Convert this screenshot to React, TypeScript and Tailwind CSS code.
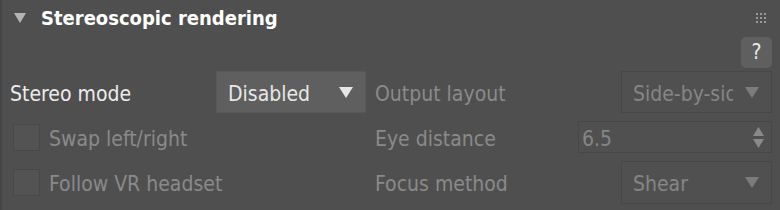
const font = { fontFamily: '"DejaVu Sans Condensed", "DejaVu Sans", sans-serif' };

function Caret({ dim }: { dim?: boolean }) {
  return (
    <svg width="14" height="11" viewBox="0 0 14 11" className="shrink-0">
      <polygon points="0,0 14,0 7,11" fill={dim ? "#7c7c7c" : "#e6e6e6"} />
    </svg>
  );
}

function Dropdown({ value, dim, width }: { value: string; dim?: boolean; width: string }) {
  return (
    <div
      className={`${width} h-full flex items-center justify-between pl-[11px] pr-[12px] border ${
        dim ? "bg-[#505050] border-[#474747] text-[#868686]" : "bg-[#5f5f5f] border-[#585858] text-[#e8e8e8]"
      }`}
    >
      <span className="overflow-hidden whitespace-nowrap w-[100px] pt-[5px]">{value}</span>
      <Caret dim={dim} />
    </div>
  );
}

function Checkbox({ label }: { label: string }) {
  return (
    <div className="flex items-center gap-[9px] pl-[11px]">
      <div className="w-[27px] h-[27px] bg-[#535353] border border-[#484848]" />
      <span className="text-[#8a8a8a] pt-[5px]">{label}</span>
    </div>
  );
}

function Grip() {
  return (
    <div className="grid grid-cols-3 gap-[2px]">
      {Array.from({ length: 9 }).map((_, i) => (
        <div key={i} className="w-[2px] h-[2px] bg-[#9a9a9a]" />
      ))}
    </div>
  );
}

export default function App() {
  return (
    <div
      style={font}
      className="w-[780px] h-[210px] bg-[#4f4f4f] border-l-2 border-[#454545] text-[21px] overflow-hidden"
    >
      {/* Header */}
      <div className="h-[36px] flex items-center justify-between pl-[12px] pr-[14px]">
        <div className="flex items-center gap-[15px]">
          <svg width="12" height="10" viewBox="0 0 12 10">
            <polygon points="0,0 12,0 6,10" fill="#b4b4b4" />
          </svg>
          <span className="text-white font-bold text-[20px]">Stereoscopic rendering</span>
        </div>
        <Grip />
      </div>

      {/* Help button */}
      <div className="flex justify-end pr-[8px] pt-[1px]">
        <div className="w-[31px] h-[31px] rounded-[5px] bg-[#5f5f5f] flex items-center justify-center text-[#e8e8e8] text-[21px]">
          ?
        </div>
      </div>

      {/* Rows */}
      <div className="flex flex-col gap-[8px] pt-[3px] pr-[8px]">
        <div className="flex h-[42px] items-center">
          <div className="w-[364px] flex items-center h-full">
            <span className="pl-[8px] pt-[5px] w-[214px] text-[#ececec]">Stereo mode</span>
            <Dropdown value="Disabled" width="w-[150px]" />
          </div>
          <div className="flex-1 flex items-center justify-between pl-[9px] h-full">
            <span className="text-[#8a8a8a] pt-[5px]">Output layout</span>
            <Dropdown value="Side-by-side" dim width="w-[151px]" />
          </div>
        </div>

        <div className="flex h-[32px] items-center">
          <div className="w-[364px]">
            <Checkbox label="Swap left/right" />
          </div>
          <div className="flex-1 flex items-center justify-between pl-[9px] h-full">
            <span className="text-[#8a8a8a] pt-[5px]">Eye distance</span>
            <div className="w-[194px] h-full flex items-center justify-between pl-[3px] pr-[7px] bg-[#505050] border border-[#474747] text-[#868686]">
              <span className="pt-[5px]">6.5</span>
              <div className="flex flex-col gap-[3px]">
                <svg width="11" height="9" viewBox="0 0 11 9">
                  <polygon points="5.5,0 11,9 0,9" fill="#8a8a8a" />
                </svg>
                <svg width="11" height="9" viewBox="0 0 11 9">
                  <polygon points="0,0 11,0 5.5,9" fill="#8a8a8a" />
                </svg>
              </div>
            </div>
          </div>
        </div>

        <div className="flex h-[43px] items-center">
          <div className="w-[364px]">
            <Checkbox label="Follow VR headset" />
          </div>
          <div className="flex-1 flex items-center justify-between pl-[9px] h-full">
            <span className="text-[#8a8a8a] pt-[5px]">Focus method</span>
            <Dropdown value="Shear" dim width="w-[151px]" />
          </div>
        </div>
      </div>
    </div>
  );
}
